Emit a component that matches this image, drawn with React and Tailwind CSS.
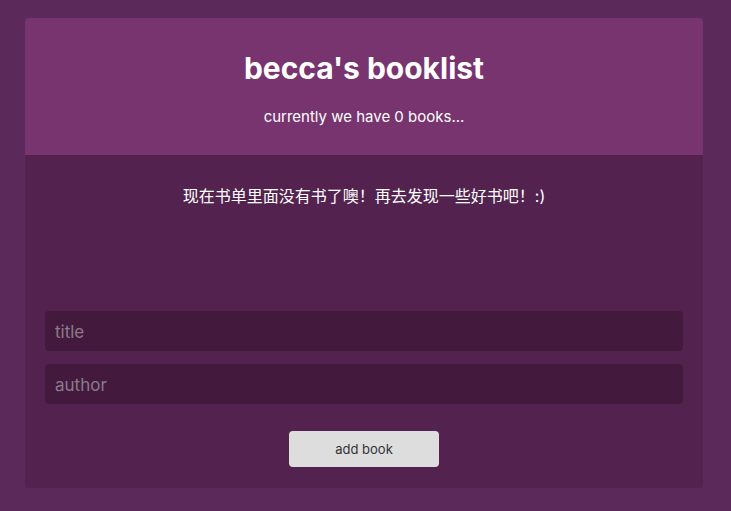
export default function App() {
  return (
    <div className="min-h-[511px] bg-[#5b295a] pt-[18px] pl-[25px] pr-[28px] pb-[23px]" style={{ fontFamily: 'Inter, "Noto Sans CJK SC", sans-serif' }}>
      <div className="rounded-[4px] overflow-hidden">
        <header className="bg-[#77346f] pt-[32px] pb-[26px] text-center text-white">
          <h1 className="text-[30px] leading-[36px] font-bold">becca's booklist</h1>
          <p className="mt-[19px] text-[15px] leading-[24px]">currently we have 0 books...</p>
        </header>
        <div className="bg-[#53224f] px-[20px] pt-[29px] pb-[21px]">
          <div className="h-[127px] text-center text-white text-[16px] leading-[24px]">
            现在书单里面没有书了噢！再去发现一些好书吧！:)
          </div>
          <form className="flex flex-col" onSubmit={(e) => e.preventDefault()}>
            <input
              type="text"
              placeholder="title"
              className="h-[40px] w-full rounded-[4px] bg-[#431a3e] px-[10px] pt-[2px] text-[17px] text-white placeholder:text-[#8c7a89] outline-none"
            />
            <input
              type="text"
              placeholder="author"
              className="mt-[13px] h-[40px] w-full rounded-[4px] bg-[#431a3e] px-[10px] pt-[2px] text-[17px] text-white placeholder:text-[#8c7a89] outline-none"
            />
            <button
              type="submit"
              className="mx-auto mt-[27px] h-[36px] w-[150px] rounded-[4px] bg-[#dddddd] pt-[2px] text-[13px] text-[#333]"
            >
              add book
            </button>
          </form>
        </div>
      </div>
    </div>
  );
}
